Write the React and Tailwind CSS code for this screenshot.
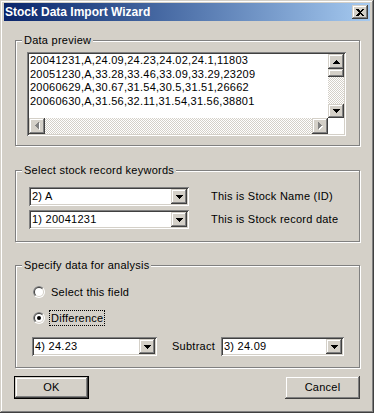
const RAISED =
  "shadow-[inset_-1px_-1px_#404040,inset_1px_1px_#d4d0c8,inset_-2px_-2px_#808080,inset_2px_2px_#ffffff]";
const SUNKEN =
  "shadow-[inset_1px_1px_#808080,inset_-1px_-1px_#ffffff,inset_2px_2px_#404040,inset_-2px_-2px_#d4d0c8]";

function ArrowDown({ color = "#000" }) {
  return (
    <svg width="7" height="4" viewBox="0 0 7 4">
      <path d="M0 0h7L3.5 4z" fill={color} shapeRendering="crispEdges" />
    </svg>
  );
}
function ArrowUp() {
  return (
    <svg width="7" height="4" viewBox="0 0 7 4">
      <path d="M0 4h7L3.5 0z" fill="#000" shapeRendering="crispEdges" />
    </svg>
  );
}
function ArrowSide({ dir }) {
  const d = dir === "left" ? "M4 0v7L0 3.5z" : "M0 0v7L4 3.5z";
  return (
    <svg width="5" height="8" viewBox="0 0 5 8">
      <path d={d} transform="translate(1 1)" fill="#ffffff" shapeRendering="crispEdges" />
      <path d={d} fill="#808080" shapeRendering="crispEdges" />
    </svg>
  );
}

function Combo({ value, w }) {
  return (
    <div className={`flex h-[19px] bg-white p-[2px] ${SUNKEN} ${w}`}>
      <div className="flex-1 pl-[1px] text-[11px] leading-[15px] text-black whitespace-nowrap overflow-hidden">
        {value}
      </div>
      <div className={`flex h-full w-[16px] items-center justify-center bg-[#d4d0c8] ${RAISED}`}>
        <ArrowDown />
      </div>
    </div>
  );
}

function Radio({ checked }) {
  return (
    <svg width="12" height="12" viewBox="0 0 12 12" className="shrink-0">
      <circle cx="6" cy="6" r="6" fill="#ffffff" />
      <path d="M10.243 1.757A6 6 0 0 0 1.757 10.243Z" fill="#808080" />
      <circle cx="6" cy="6" r="5" fill="#d4d0c8" />
      <path d="M9.536 2.464A5 5 0 0 0 2.464 9.536Z" fill="#404040" />
      <circle cx="6" cy="6" r="4" fill="#ffffff" />
      {checked && <circle cx="6" cy="6" r="2" fill="#000000" />}
    </svg>
  );
}

function Group({ label, className, children }) {
  return (
    <div
      className={`relative ml-[11px] w-[345px] border border-[#808080] shadow-[inset_1px_1px_#ffffff,1px_1px_#ffffff] ${className}`}
    >
      <span className="absolute left-[6px] top-[-8px] bg-[#d4d0c8] px-[2px] leading-[14px] whitespace-nowrap">
        {label}
      </span>
      {children}
    </div>
  );
}

const LINES = [
  "20041231,A,24.09,24.23,24.02,24.1,11803",
  "20051230,A,33.28,33.46,33.09,33.29,23209",
  "20060629,A,30.67,31.54,30.5,31.51,26662",
  "20060630,A,31.56,32.11,31.54,31.56,38801",
];

const CHECKER =
  "bg-[repeating-conic-gradient(#d4d0c8_0%_25%,#ffffff_0%_50%)] bg-[length:2px_2px]";

export default function App() {
  return (
    <div
      className={`flex h-[413px] w-[374px] flex-col bg-[#d4d0c8] px-[4px] pt-[3px] text-[11px] tracking-[0.25px] text-black font-['Liberation_Sans',Arial,sans-serif] shadow-[inset_-1px_-1px_#404040,inset_1px_1px_#d4d0c8,inset_-2px_-2px_#808080,inset_2px_2px_#ffffff]`}
    >
      {/* Title bar */}
      <div className="flex h-[18px] items-center justify-between bg-linear-to-r from-[#0a246a] to-[#a6caf0] pl-[1px] pr-[2px]">
        <span className="text-[12px] font-bold leading-[18px] tracking-normal text-white whitespace-nowrap">
          Stock Data Import Wizard
        </span>
        <div className={`flex h-[14px] w-[16px] items-center justify-center bg-[#d4d0c8] ${RAISED}`}>
          <svg width="8" height="7" viewBox="0 0 8 7" shapeRendering="crispEdges">
            <path d="M0 0h2l2 2 2-2h2L5 3.5 8 7H6L4 5 2 7H0l3-3.5z" fill="#000" />
          </svg>
        </div>
      </div>

      {/* Data preview */}
      <Group label="Data preview" className="mt-[19px] h-[106px] pl-[11px] pt-[11px]">
        <div className={`h-[84px] w-[319px] bg-white p-[2px] ${SUNKEN}`}>
          <div className="grid h-full grid-cols-[1fr_16px] grid-rows-[1fr_16px]">
            <div className="overflow-hidden pl-[1px] leading-[13.67px] whitespace-nowrap">
              {LINES.map((l) => (
                <div key={l}>{l}</div>
              ))}
            </div>
            <div className="flex flex-col">
              <div className={`flex h-[15px] items-center justify-center bg-[#d4d0c8] ${RAISED}`}>
                <ArrowUp />
              </div>
              <div className={`h-[8px] bg-[#d4d0c8] ${RAISED}`} />
              <div className={`flex-1 ${CHECKER}`} />
              <div className={`flex h-[14px] items-center justify-center bg-[#d4d0c8] ${RAISED}`}>
                <ArrowDown />
              </div>
            </div>
            <div className="flex">
              <div className={`flex w-[16px] items-center justify-center bg-[#d4d0c8] ${RAISED}`}>
                <ArrowSide dir="left" />
              </div>
              <div className={`flex-1 ${CHECKER}`} />
              <div className={`flex w-[16px] items-center justify-center bg-[#d4d0c8] ${RAISED}`}>
                <ArrowSide dir="right" />
              </div>
            </div>
            <div className="bg-white" />
          </div>
        </div>
      </Group>

      {/* Keywords */}
      <Group label="Select stock record keywords" className="mt-[24px] h-[72px] pl-[13px] pt-[16px]">
        <div className="flex flex-col gap-[4px]">
          <div className="flex items-center gap-[22px]">
            <Combo value="2) A" w="w-[160px]" />
            <span className="whitespace-nowrap">This is Stock Name (ID)</span>
          </div>
          <div className="flex items-center gap-[22px]">
            <Combo value="1) 20041231" w="w-[160px]" />
            <span className="whitespace-nowrap">This is Stock record date</span>
          </div>
        </div>
      </Group>

      {/* Analysis */}
      <Group label="Specify data for analysis" className="mt-[23px] h-[103px] pl-[16px] pt-[20px]">
        <div className="flex flex-col">
          <div className="ml-[1px] flex h-[12px] items-center gap-[6px]">
            <Radio />
            <span className="whitespace-nowrap leading-[14px]">Select this field</span>
          </div>
          <div className="ml-[1px] mt-[14px] flex h-[12px] items-center gap-[4px]">
            <Radio checked />
            <span className="border border-dotted border-black px-[1px] leading-[14px] whitespace-nowrap">
              Difference
            </span>
          </div>
          <div className="mt-[13px] flex items-center">
            <Combo value="4) 24.23" w="w-[125px]" />
            <span className="ml-[15px] w-[49px] whitespace-nowrap">Subtract</span>
            <Combo value="3) 24.09" w="w-[123px]" />
          </div>
        </div>
      </Group>

      {/* Buttons */}
      <div className="mx-[10px] mt-[8px] flex justify-between">
        <div className="h-[23px] w-[75px] border border-black">
          <div className={`flex h-full w-full items-center justify-center bg-[#d4d0c8] ${RAISED}`}>
            OK
          </div>
        </div>
        <div className={`flex h-[23px] w-[75px] items-center justify-center bg-[#d4d0c8] ${RAISED}`}>
          Cancel
        </div>
      </div>
    </div>
  );
}
